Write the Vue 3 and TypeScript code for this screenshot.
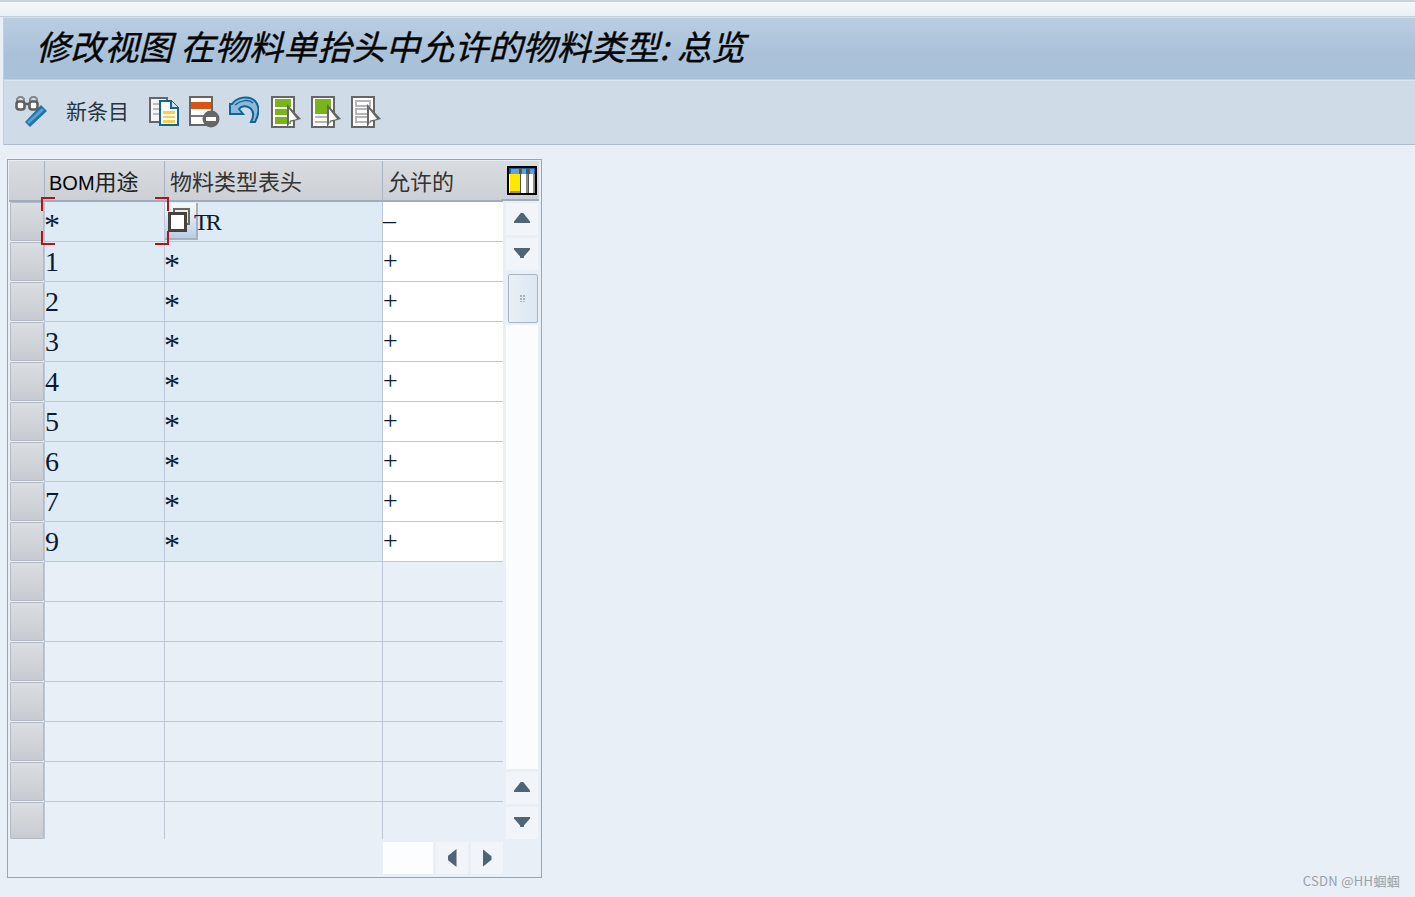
<script setup lang="ts">
interface Row {
  usage: string
  type: string
  allowed: string
}

const rows: Row[] = [
  { usage: '*', type: 'TR', allowed: '–' },
  ...['1', '2', '3', '4', '5', '6', '7', '9'].map((usage) => ({ usage, type: '*', allowed: '+' })),
  ...Array.from({ length: 7 }, () => ({ usage: '', type: '', allowed: '' })),
]
</script>

<template>
  <div class="page">
    <div class="top-strip"></div>
    <div class="top-gap"></div>
    <div class="main">
      <h1 class="title">修改视图 在物料单抬头中允许的物料类型: 总览</h1>
      <div class="toolbar">
        <svg width="32" height="32" viewBox="0 0 32 32">
          <path d="M2 6V3l2-2h3l2 2v3M15 6V3l2-2h3l2 2v3" fill="none" stroke="#8a8a8a" stroke-width="2" />
          <rect x="1.5" y="5.5" width="8" height="8" rx="2.5" fill="#fff" stroke="#5f5f5f" stroke-width="2.6" />
          <rect x="14.5" y="5.5" width="8" height="8" rx="2.5" fill="#fff" stroke="#5f5f5f" stroke-width="2.6" />
          <path d="M9 8h6" stroke="#5f5f5f" stroke-width="2.5" />
          <path d="M26 9l6 6-17 16h-5v-5z" fill="#1f74ad" />
          <path d="M27 12l2 2-15 14-2-2z" fill="#5d9fcc" />
          <path d="M10 26l5 5h-5z" fill="#cfdce7" />
        </svg>
        <span class="tool-text">新条目</span>
        <div class="tool-icons">
          <svg width="30" height="32" viewBox="0 0 30 32" shape-rendering="crispEdges">
            <rect x="1" y="2" width="17" height="24" fill="#f4f4f4" stroke="#666" stroke-width="2" />
            <path d="M4 7h6v2H4zM4 12h6v2H4zM4 17h6v2H4z" fill="#bbb" />
            <path d="M11 5h11l7 7v17H11z" fill="#fff" stroke="#0f6596" stroke-width="2" />
            <path d="M22 5v7h7" fill="#cfe1ee" stroke="#0f6596" stroke-width="2" />
            <path d="M14 15h12v3H14zM14 20h12v2H14zM14 24h12v3H14z" fill="#fdcf45" />
          </svg>
          <svg class="icon-delete" width="32" height="32" viewBox="0 0 32 32">
            <g shape-rendering="crispEdges">
              <rect x="1" y="1" width="22" height="28" fill="#fff" stroke="#666" stroke-width="2" />
              <rect x="2" y="6" width="20" height="7" fill="#d95513" />
              <rect x="2" y="19" width="20" height="2" fill="#777" />
            </g>
            <circle cx="22" cy="23" r="8.5" fill="#666" />
            <rect x="17" y="21" width="10" height="4" fill="#fff" />
          </svg>
          <svg class="icon-undo" width="30" height="32" viewBox="0 0 30 32">
            <path d="M3 8C8 1 20-1 26 5c5 5 4 14 0 21h-4c3-6 3-11-1-14-4-3-9-2-11 1l4 5H1V8z" fill="#8db9da" stroke="#0f6596" stroke-width="2" />
            <path d="M6 9c6-5 14-6 18-2" fill="none" stroke="#0f6596" stroke-width="1.5" />
          </svg>
          <svg width="30" height="32" viewBox="0 0 30 32">
            <g shape-rendering="crispEdges">
              <rect x="1" y="1" width="22" height="30" fill="#fff" stroke="#666" stroke-width="2" />
              <path d="M4 3h16v8H4zM4 13h16v6H4zM4 21h16v7H4z" fill="#78b41a" />
            </g>
            <path d="M16 8l14 15-11 3-3 6z" fill="#666" />
            <path d="M18 13l8 10-7 1.500-1 3.500z" fill="#fff" />
          </svg>
          <svg width="30" height="32" viewBox="0 0 30 32">
            <g shape-rendering="crispEdges">
              <rect x="1" y="1" width="22" height="30" fill="#fff" stroke="#666" stroke-width="2" />
              <path d="M4 3h16v15H4z" fill="#78b41a" />
              <path d="M4 20h16v2H4zM4 25h16v2H4z" fill="#b5b5b5" />
            </g>
            <path d="M16 8l14 15-11 3-3 6z" fill="#666" />
            <path d="M18 13l8 10-7 1.500-1 3.500z" fill="#fff" />
          </svg>
          <svg width="30" height="32" viewBox="0 0 30 32">
            <g shape-rendering="crispEdges">
              <rect x="1" y="1" width="22" height="30" fill="#fff" stroke="#666" stroke-width="2" />
              <path d="M5 5h14v5H5zM5 13h14v5H5zM5 21h14v5H5z" fill="none" stroke="#b5b5b5" stroke-width="2" />
            </g>
            <path d="M16 8l14 15-11 3-3 6z" fill="#666" />
            <path d="M18 13l8 10-7 1.500-1 3.500z" fill="#fff" />
          </svg>
        </div>
      </div>
    </div>

    <section class="frame">
      <div class="frame-body">
        <div class="grid">
          <div class="head-cell head-corner"></div>
          <div class="head-cell head-usage"><span class="latin">BOM</span>用途</div>
          <div class="head-cell">物料类型表头</div>
          <div class="head-cell">允许的</div>

          <template v-for="(row, i) in rows" :key="i">
            <div class="row-head" :class="{ last: i === rows.length - 1 }"><span></span></div>
            <div class="cell" :class="{ filled: row.usage, last: i === rows.length - 1 }">
              <span :class="row.usage === '*' ? 'star' : 'val'">{{ row.usage }}</span>
              <div v-if="i === 0" class="focus">
                <i class="corner tl"></i><i class="corner tr"></i><i class="corner bl"></i><i class="corner br"></i>
              </div>
            </div>
            <div class="cell" :class="{ filled: row.usage, last: i === rows.length - 1 }">
              <span v-if="row.type === 'TR'" class="val tr-val">TR</span>
              <span v-else class="star">{{ row.type }}</span>
              <div v-if="i === 0" class="copy-btn">
                <svg width="24" height="24" viewBox="0 0 24 24" shape-rendering="crispEdges">
                  <path d="M7 5V1h15v15h-4" fill="none" stroke="#6b6660" stroke-width="2" />
                  <rect x="2" y="5" width="16" height="17" fill="#fff" stroke="#46423e" stroke-width="3" />
                </svg>
              </div>
            </div>
            <div class="cell" :class="{ white: row.usage, last: i === rows.length - 1 }">
              <span class="sign">{{ row.allowed }}</span>
            </div>
          </template>
        </div>

        <div class="side">
          <div class="config">
            <svg width="30" height="29" viewBox="0 0 30 29" shape-rendering="crispEdges">
              <rect x="0" y="0" width="30" height="29" fill="#000" />
              <rect x="2" y="2" width="26" height="25" fill="#fff" />
              <path d="M2 2h26v6H2z" fill="#1463a8" />
              <path d="M4 3h8v5H4zM15 3h4v5h-4zM23 3h4v5h-4z" fill="#6a9fd0" />
              <rect x="3" y="8" width="10" height="19" fill="#ffe800" />
              <rect x="3" y="25" width="10" height="2" fill="#a89a10" />
              <rect x="13" y="2" width="1" height="25" fill="#555" />
              <rect x="19" y="8" width="2" height="19" fill="#8a8a8a" />
              <rect x="21" y="2" width="1" height="25" fill="#555" />
              <rect x="26" y="8" width="2" height="19" fill="#8a8a8a" />
            </svg>
          </div>
          <div class="scroll-btn"><i class="arrow up"></i></div>
          <div class="scroll-btn"><i class="arrow down"></i></div>
          <div class="thumb">
            <span class="grip"></span>
          </div>
          <div class="track"></div>
          <div class="scroll-btn"><i class="arrow up"></i></div>
          <div class="scroll-btn"><i class="arrow down"></i></div>
        </div>
      </div>
      <div class="footer">
        <div class="page-box"></div>
        <div class="scroll-btn"><i class="arrow left"></i></div>
        <div class="scroll-btn"><i class="arrow right"></i></div>
      </div>
    </section>

    <div class="watermark">CSDN @HH蝈蝈</div>
  </div>
</template>

<style>
body {
  background: #e8eff7;
}
</style>

<style scoped>
.page {
  position: relative;
  width: 1415px;
  height: 897px;
  overflow: hidden;
  background: #e8eff7;
  font-family: "Noto Sans CJK SC", "Liberation Sans", sans-serif;
}

.top-strip {
  height: 2px;
  background: #c9d2de;
}

.top-gap {
  height: 15px;
  background: linear-gradient(#f6f8fb, #e9eff6);
  border-bottom: 1px solid #c4cfdc;
  box-sizing: border-box;
}

.main {
  margin-left: 3px;
  border-left: 1px solid #c4cfdc;
}

.title {
  height: 63px;
  margin: 0;
  box-sizing: border-box;
  padding-left: 32px;
  border-top: 1px solid #d5e2ee;
  border-bottom: 1px solid #c2d2e2;
  background: linear-gradient(#bacee1, #a9c1d9 60%);
  font-size: 34px;
  font-weight: 400;
  font-style: italic;
  letter-spacing: 0.2px;
  line-height: 56px;
  color: #050505;
  white-space: nowrap;
  -webkit-text-stroke: 0.4px #050505;
}

.toolbar {
  display: flex;
  align-items: center;
  height: 65px;
  box-sizing: border-box;
  padding: 0 0 1px 11px;
  border-top: 1px solid #dbe5ee;
  border-bottom: 1px solid #aebccd;
  background: #cfdce7;
}

.tool-text {
  margin: 0 0 4px 19px;
  font-size: 21px;
  line-height: 1;
  color: #2a3440;
}

.tool-icons {
  display: flex;
  align-items: center;
  gap: 10px;
  margin-left: 20px;
}

.icon-delete {
  margin-right: -2px;
}

.icon-undo {
  margin-right: 2px;
}

.frame {
  width: 535px;
  height: 719px;
  box-sizing: border-box;
  margin: 14px 0 0 7px;
  padding: 1px;
  border: 1px solid #8fa8bf;
}

.frame-body {
  display: flex;
}

.grid {
  display: grid;
  grid-template-columns: 35px 120px 218px 121px;
  grid-template-rows: 41px;
  grid-auto-rows: 40px;
}

.head-cell {
  box-sizing: border-box;
  padding-left: 5px;
  border-left: 1px solid #aab4c0;
  border-bottom: 2px solid #a0acbc;
  background: linear-gradient(#d9dce0, #ccd0d6);
  font-size: 22px;
  line-height: 38px;
  color: #333;
}

.head-corner {
  border-left: 0;
  padding: 0;
}

.head-usage {
  padding-left: 4px;
  color: #222;
}

.latin {
  font-family: "Liberation Sans", sans-serif;
  font-size: 20px;
  color: #000;
}

.row-head {
  box-sizing: border-box;
  padding: 0 0 1px 1px;
}

.row-head span {
  display: block;
  height: 100%;
  border: 1px solid #b5bbc4;
  border-radius: 1px;
  box-sizing: border-box;
  background: linear-gradient(#dadde1, #c8ccd2);
}

.row-head.last {
  height: 38px;
}

.cell {
  position: relative;
  box-sizing: border-box;
  border-left: 1px solid #bcc6d4;
  border-bottom: 1px solid #bcc6d4;
  font-family: "Liberation Serif", serif;
  line-height: 40px;
  color: #0a1a33;
}

.cell.last {
  height: 37px;
  border-bottom: 0;
}

.filled {
  background: #deebf5;
}

.white {
  background: #fff;
}

.val {
  font-size: 28px;
}

.tr-val {
  position: relative;
  z-index: 1;
  margin-left: 29px;
  font-size: 24px;
  letter-spacing: -3px;
}

.star {
  display: inline-block;
  margin-left: -1px;
  font-size: 32px;
  line-height: 40px;
  transform: translateY(3px);
}

.sign {
  position: relative;
  top: -1px;
  font-size: 26px;
}

.focus {
  position: absolute;
  z-index: 2;
  inset: -5px -5px -4px -4px;
  pointer-events: none;
}

.corner {
  position: absolute;
  width: 12px;
  height: 12px;
  border: 0 solid #b0141e;
}

.tl {
  top: 0;
  left: 0;
  border-width: 2px 0 0 2px;
}

.tr {
  top: 0;
  right: 0;
  border-width: 2px 2px 0 0;
}

.bl {
  bottom: 0;
  left: 0;
  border-width: 0 0 2px 2px;
}

.br {
  bottom: 0;
  right: 0;
  border-width: 0 2px 2px 0;
}

.copy-btn {
  position: absolute;
  top: 1px;
  left: 0;
  display: flex;
  align-items: flex-end;
  width: 33px;
  height: 37px;
  box-sizing: border-box;
  padding: 0 0 6px 2px;
  border-right: 2px solid #a9b0b9;
  border-bottom: 2px solid #a9b0b9;
  background: linear-gradient(#f8fafc, #b9cde6);
}

.side {
  display: flex;
  flex-direction: column;
  align-items: flex-end;
  width: 36px;
}

.config {
  display: flex;
  align-items: center;
  justify-content: flex-end;
  box-sizing: border-box;
  width: 38px;
  height: 40px;
  margin-left: -2px;
  padding: 0 2px 0 0;
  border-bottom: 2px solid #a0acbc;
  background: linear-gradient(#d9dce0, #ccd0d6);
}

.scroll-btn {
  display: flex;
  align-items: center;
  justify-content: center;
  flex-shrink: 0;
  width: 32px;
  height: 32px;
  margin-right: 1px;
  background: #f1f5fa;
}

.side .config + .scroll-btn {
  margin-top: 2px;
}

.side .scroll-btn + .scroll-btn {
  margin-top: 3px;
}

.arrow {
  display: block;
  background: #4f6475;
}

.up {
  width: 16px;
  height: 10px;
  margin-top: -2px;
  clip-path: polygon(42% 0, 58% 0, 100% 85%, 100% 100%, 0 100%, 0 85%);
}

.down {
  width: 16px;
  height: 10px;
  margin-top: -2px;
  clip-path: polygon(0 0, 100% 0, 100% 15%, 62% 85%, 62% 100%, 38% 100%, 38% 85%, 0 15%);
}

.left {
  width: 9px;
  height: 18px;
  clip-path: polygon(100% 0, 100% 100%, 0 60%, 0 40%);
}

.right {
  width: 9px;
  height: 18px;
  clip-path: polygon(0 0, 100% 40%, 100% 60%, 0 100%);
}

.thumb {
  display: flex;
  align-items: center;
  justify-content: center;
  box-sizing: border-box;
  width: 30px;
  height: 49px;
  margin: 4px 1px 0 0;
  border: 1px solid #a9b4c0;
  border-radius: 2px;
  background: linear-gradient(90deg, #e9f0f6, #dce7f1);
}

.grip {
  width: 6px;
  height: 7px;
  background: radial-gradient(circle at 1px 1px, #a8b2bc 1px, transparent 1px) 0 0 / 3px 3px;
}

.track {
  width: 32px;
  height: 444px;
  margin: 2px 1px 3px 0;
  background: #fbfcfe;
}

.footer {
  display: flex;
  gap: 3px;
  margin: 0 0 0 374px;
}

.page-box {
  width: 50px;
  height: 32px;
  background: #fcfdfe;
}

.footer .scroll-btn {
  margin-right: 0;
}

.watermark {
  position: absolute;
  right: 15px;
  bottom: 8px;
  font-size: 13px;
  letter-spacing: 0.3px;
  line-height: 17px;
  color: #9a9fa6;
}
</style>
